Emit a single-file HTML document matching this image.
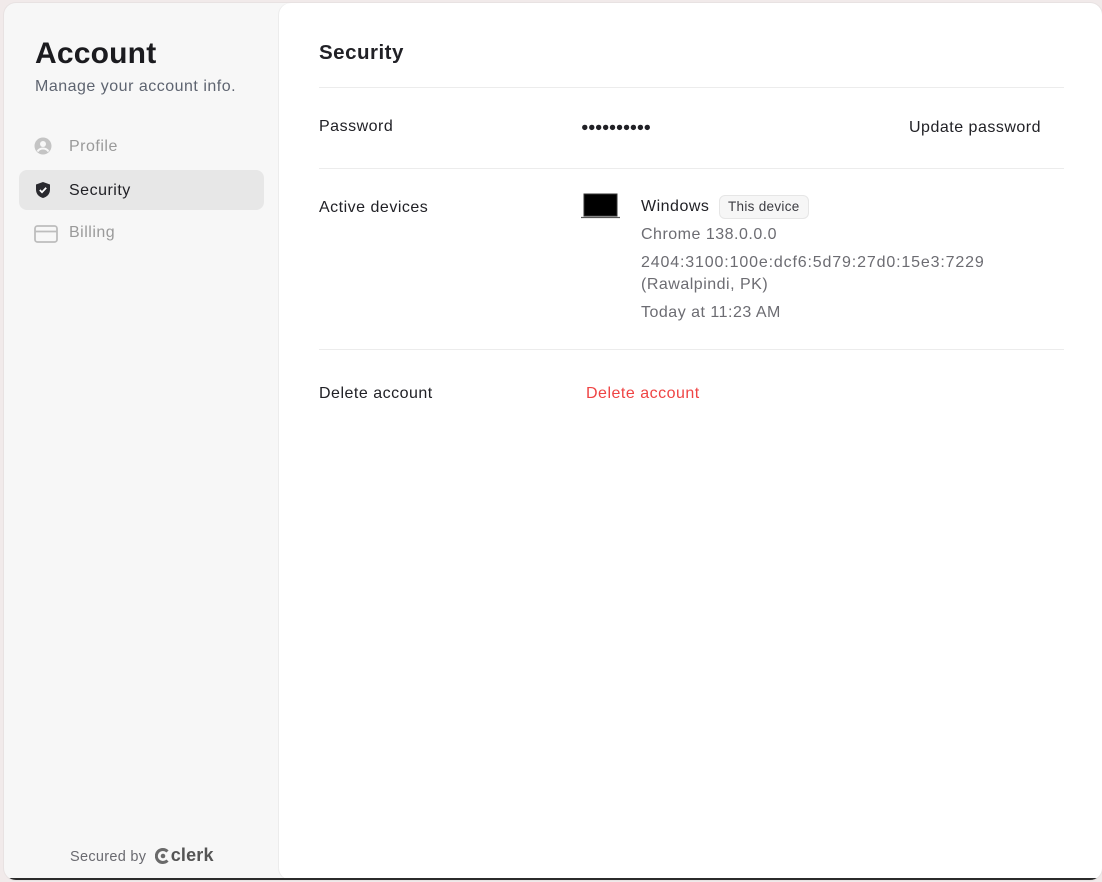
<!DOCTYPE html>
<html><head><meta charset="utf-8"><style>
*{box-sizing:border-box;margin:0;padding:0}
html,body{width:1102px;height:882px;overflow:hidden;background:#f1eaea;font-family:"Liberation Sans",sans-serif;}
.card{position:absolute;left:4px;top:3px;width:1098px;height:877px;border-radius:12px;background:#f7f7f7;overflow:hidden;box-shadow:0 0 0 1px #e8e2e2;}
.main{position:absolute;left:275px;top:0;right:0;bottom:0;background:#fff;border-radius:12px;box-shadow:-1px 0 0 #ececec;}
.bar{position:absolute;left:0;right:0;bottom:0;height:2px;background:#2b2b2b}
h1{position:absolute;left:31px;top:34px;font-size:30px;font-weight:700;color:#1b1b1f;letter-spacing:0.2px}
.sub{position:absolute;left:31px;top:75px;font-size:16px;letter-spacing:0.5px;color:#5e6470}
.nav{position:absolute;left:15px;width:245px;height:40px;border-radius:8px;font-size:16px;letter-spacing:0.5px;color:#9a9a9a}
.nav span{position:absolute;left:50px;top:12px}
.nav svg{position:absolute;left:15px;top:11px}
.nav.act{background:#e7e7e7;color:#212126;font-weight:500}
.foot{position:absolute;left:66px;top:842px;font-size:14.5px;letter-spacing:0.3px;color:#6a6a70}
.foot b{font-size:18px;color:#555;font-weight:700;letter-spacing:0.2px}
.t{position:absolute;font-size:16px;letter-spacing:0.5px;color:#212126}
.g{color:#6c6c72}
.hr{position:absolute;left:40px;right:38px;height:1px;background:#ececec}
</style></head><body>
<div class="card">
<h1>Account</h1>
<div class="sub">Manage your account info.</div>
<div class="nav" style="top:123px"><svg width="18" height="18" viewBox="0 0 18 18"><circle cx="9" cy="9" r="8.5" fill="#c4c4c4"/><circle cx="9" cy="7" r="3" fill="#f7f7f7"/><path d="M3.5 14.5c1.5-2.5 3.5-3 5.5-3s4 .5 5.5 3" stroke="#f7f7f7" stroke-width="2" fill="none"/></svg><span>Profile</span></div>
<div class="nav act" style="top:167px"><svg width="18" height="18" viewBox="0 0 18 18"><path d="M9 1L2 3.5v5c0 4.5 3 7.5 7 8.5 4-1 7-4 7-8.5v-5z" fill="#2a2a2f"/><path d="M5.8 9l2.2 2.2 4.2-4.4" stroke="#fff" stroke-width="1.8" fill="none"/></svg><span>Security</span></div>
<div class="nav" style="top:209px"><svg width="24" height="20" viewBox="0 0 24 20" style="left:15px;top:12px"><rect x="1" y="2" width="22" height="16" rx="2.5" stroke="#bdbdbd" stroke-width="1.8" fill="none"/><line x1="1" y1="7.5" x2="23" y2="7.5" stroke="#bdbdbd" stroke-width="1.8"/></svg><span>Billing</span></div>
<div class="foot">Secured by <svg width="16" height="16" viewBox="0 0 16 16" style="vertical-align:-3px;margin-left:4px"><path d="M12.5 3.5A6.5 6.5 0 1 0 12.5 12.5" stroke="#6a6a6a" stroke-width="3" fill="none"/><circle cx="8" cy="8" r="2.3" fill="#6a6a6a"/></svg><b>clerk</b></div>
<div class="bar" style="left:0"></div>
<div class="main">
<div class="bar"></div>
<div class="t" style="left:40px;top:38px;font-size:20.5px;font-weight:700">Security</div>
<div class="hr" style="top:84px"></div>
<div class="t" style="left:40px;top:115px">Password</div>
<div class="t" style="left:302px;top:117px;letter-spacing:-0.6px;font-size:12.5px">●●●●●●●●●●</div>
<div class="t" style="left:630px;top:116px">Update password</div>
<div class="hr" style="top:165px"></div>
<div class="t" style="left:40px;top:196px">Active devices</div>
<svg style="position:absolute;left:302px;top:190px" width="40" height="26" viewBox="0 0 40 26"><rect x="3" y="1" width="33" height="22" fill="#000" stroke="#333"/><line x1="0" y1="24.5" x2="39" y2="24.5" stroke="#555" stroke-width="1.2"/></svg>
<div class="t" style="left:362px;top:195px">Windows</div>
<div style="position:absolute;left:440px;top:192px;height:24px;padding:0 8px;border:1px solid #e6e6e6;border-radius:6px;background:#f6f6f6;font-size:13.5px;letter-spacing:0.3px;line-height:22px;color:#3c3c42">This device</div>
<div class="t g" style="left:362px;top:223px">Chrome 138.0.0.0</div>
<div class="t g" style="left:362px;top:251px;letter-spacing:0.85px">2404:3100:100e:dcf6:5d79:27d0:15e3:7229</div>
<div class="t g" style="left:362px;top:273px">(Rawalpindi, PK)</div>
<div class="t g" style="left:362px;top:301px">Today at 11:23 AM</div>
<div class="hr" style="top:346px"></div>
<div class="t" style="left:40px;top:382px">Delete account</div>
<div class="t" style="left:307px;top:382px;color:#ef4444">Delete account</div>
</div>
</div>
</body></html>
